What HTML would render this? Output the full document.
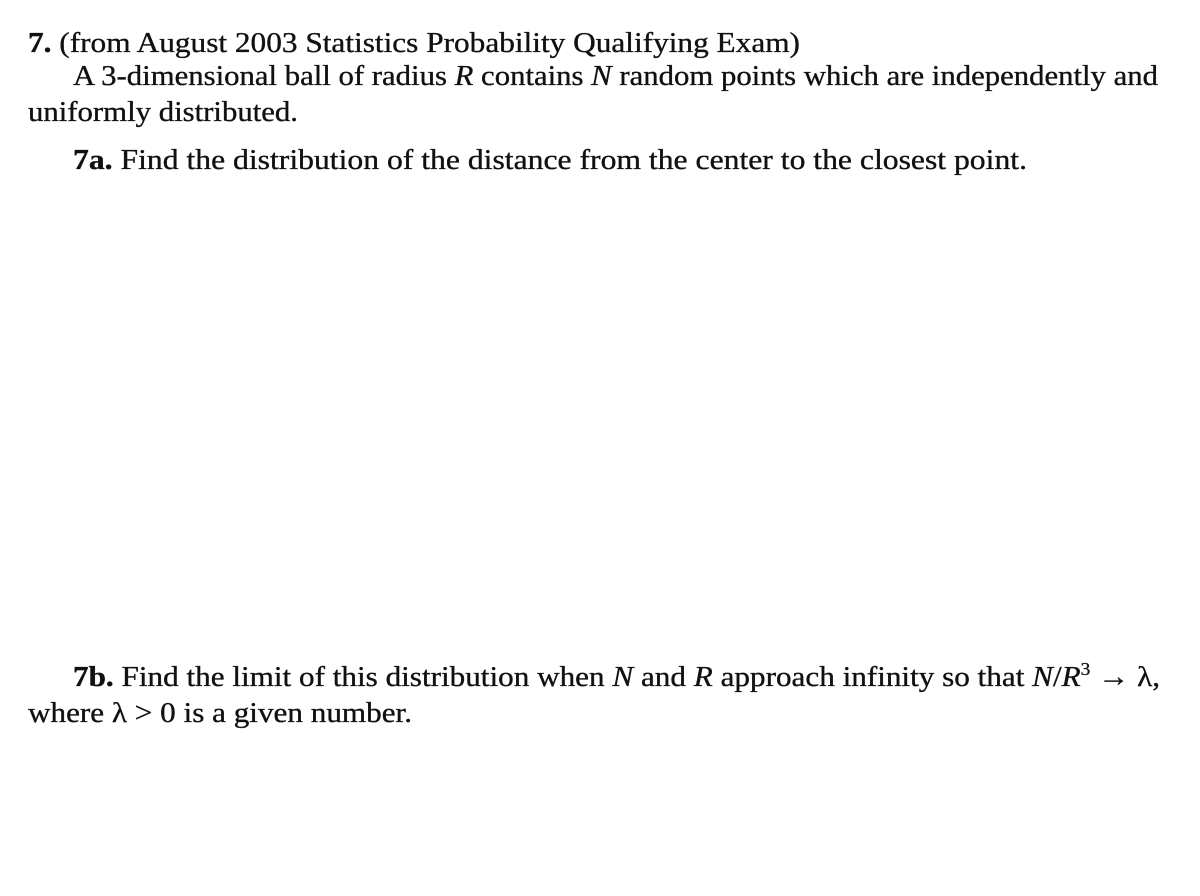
<!DOCTYPE html>
<html><head><meta charset="utf-8"><style>
html,body{margin:0;padding:0;background:#fff;width:1200px;height:896px;overflow:hidden}
svg text{font-family:"Liberation Serif","DejaVu Serif",serif;font-size:29px;fill:#111;stroke:#111;stroke-width:0.35px}
.b{font-weight:bold}
.i{font-style:italic}
</style></head><body>
<svg width="1200" height="896" xmlns="http://www.w3.org/2000/svg">
<text x="28" y="52" textLength="772" lengthAdjust="spacingAndGlyphs"><tspan class="b">7.</tspan> (from August 2003 Statistics Probability Qualifying Exam)</text>
<text x="73" y="85" textLength="1085" lengthAdjust="spacingAndGlyphs">A 3-dimensional ball of radius <tspan class="i">R</tspan> contains <tspan class="i">N</tspan> random points which are independently and</text>
<text x="28" y="121" textLength="270" lengthAdjust="spacingAndGlyphs">uniformly distributed.</text>
<text x="73" y="169" textLength="954" lengthAdjust="spacingAndGlyphs"><tspan class="b">7a.</tspan> Find the distribution of the distance from the center to the closest point.</text>
<text x="73" y="686" textLength="1087" lengthAdjust="spacingAndGlyphs"><tspan class="b">7b.</tspan> Find the limit of this distribution when <tspan class="i">N</tspan> and <tspan class="i">R</tspan> approach infinity so that <tspan class="i">N</tspan>/<tspan class="i">R</tspan><tspan font-size="18" dy="-11">3</tspan><tspan dy="11"> → λ,</tspan></text>
<text x="28" y="722" textLength="384" lengthAdjust="spacingAndGlyphs">where λ &gt; 0 is a given number.</text>
</svg>
</body></html>
